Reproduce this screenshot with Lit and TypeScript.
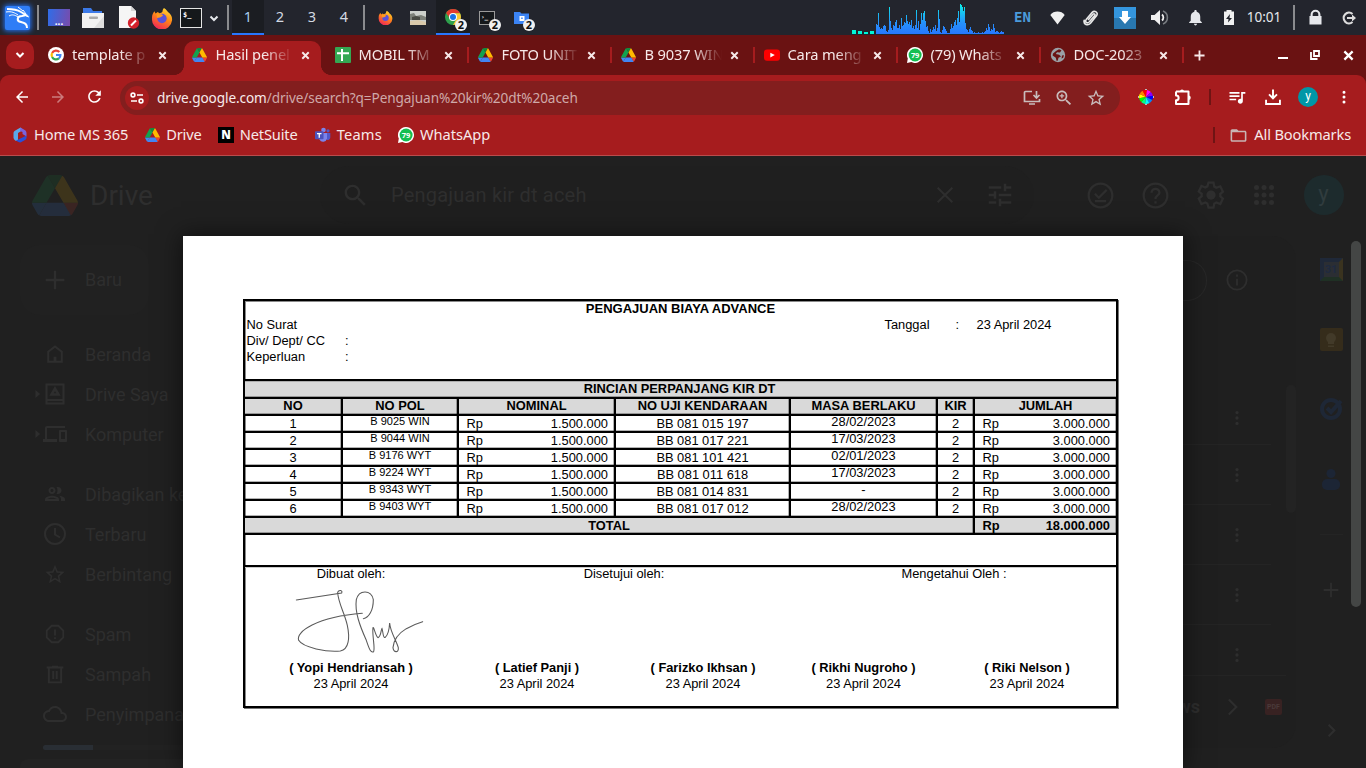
import { LitElement, html, svg, css } from "lit";
import { customElement } from "lit/decorators.js";

const P: Record<string, string> = {
  back: "M20 11H7.83l5.59-5.59L12 4l-8 8 8 8 1.41-1.41L7.83 13H20v-2z",
  forward: "M12 4l-1.41 1.41L16.17 11H4v2h12.17l-5.58 5.59L12 20l8-8z",
  reload: "M17.65 6.35C16.2 4.9 14.21 4 12 4c-4.42 0-7.99 3.58-7.99 8s3.57 8 7.99 8c3.73 0 6.84-2.55 7.73-6h-2.08c-.82 2.33-3.04 4-5.65 4-3.31 0-6-2.69-6-6s2.69-6 6-6c1.66 0 3.14.69 4.22 1.78L13 11h7V4l-2.35 2.35z",
  star: "M22 9.24l-7.19-.62L12 2 9.19 8.63 2 9.24l5.46 4.73L5.82 21 12 17.27 18.18 21l-1.63-7.03L22 9.24zM12 15.4l-3.76 2.27 1-4.28-3.32-2.88 4.38-.38L12 6.1l1.71 4.04 4.38.38-3.32 2.88 1 4.28L12 15.4z",
  search: "M15.5 14h-.79l-.28-.27C15.41 12.59 16 11.11 16 9.5 16 5.91 13.09 3 9.5 3S3 5.91 3 9.5 5.91 16 9.5 16c1.61 0 3.09-.59 4.23-1.57l.27.28v.79l5 4.99L20.49 19l-4.99-5zm-6 0C7.01 14 5 11.99 5 9.5S7.01 5 9.5 5 14 7.01 14 9.5 11.99 14 9.5 14z",
  zoom: "M15.5 14h-.79l-.28-.27C15.41 12.59 16 11.11 16 9.5 16 5.91 13.09 3 9.5 3S3 5.91 3 9.5 5.91 16 9.5 16c1.61 0 3.09-.59 4.23-1.57l.27.28v.79l5 4.99L20.49 19l-4.99-5zm-6 0C7.01 14 5 11.99 5 9.5S7.01 5 9.5 5 14 7.01 14 9.5 11.99 14 9.5 14zM8.7 6.8h1.6v1.9h1.9v1.6h-1.9v1.9H8.7v-1.9H6.8V8.7h1.9z",
  queue: "M15 6H3v2h12V6zm0 4H3v2h12v-2zM3 16h8v-2H3v2zM17 6v8.18c-.31-.11-.65-.18-1-.18-1.66 0-3 1.34-3 3s1.34 3 3 3 3-1.34 3-3V8h3V6h-5z",
  download: "M10.700 2h2.600v8.700l3.100-3.100 1.800 1.800L12 15.600 5.800 9.400l1.800-1.800 3.100 3.100zM1.500 15.500H4V20h16v-4.500h2.500v7h-21z",
  bell: "M12 22c1.1 0 2-.9 2-2h-4c0 1.1.9 2 2 2zm6-6v-5c0-3.07-1.64-5.64-4.5-6.32V4c0-.83-.67-1.5-1.5-1.5s-1.5.67-1.5 1.5v.68C7.63 5.36 6 7.92 6 11v5l-2 2v1h16v-1l-2-2z",
  people: "M9 13.75c-2.34 0-7 1.17-7 3.5V19h14v-1.75c0-2.33-4.66-3.5-7-3.5zM4.34 17c.84-.58 2.87-1.25 4.66-1.25s3.82.67 4.66 1.25H4.34zM9 12c1.93 0 3.5-1.57 3.5-3.5S10.930 5 9 5 5.5 6.57 5.500 8.500 7.070 12 9 12zm0-5c.83 0 1.500.67 1.500 1.500S9.830 10 9 10s-1.500-.67-1.500-1.500S8.170 7 9 7zm7.040 6.810c1.160.84 1.960 1.960 1.960 3.440V19h4v-1.750c0-2.020-3.500-3.170-5.960-3.440zM15 12c1.930 0 3.500-1.570 3.500-3.500S16.930 5 15 5c-.54 0-1.040.13-1.500.35.63.89 1 1.980 1 3.150s-.37 2.260-1 3.150c.46.22.96.35 1.500.35z",
  cloud: "M19.35 10.04C18.67 6.59 15.64 4 12 4 9.11 4 6.6 5.64 5.35 8.04 2.34 8.36 0 10.91 0 14c0 3.31 2.69 6 6 6h13c2.76 0 5-2.24 5-5 0-2.64-2.05-4.78-4.65-4.96zM19 18H6c-2.21 0-4-1.79-4-4 0-2.05 1.53-3.76 3.56-3.97l1.07-.11.5-.95C8.08 7.14 9.94 6 12 6c2.62 0 4.88 1.86 5.39 4.43l.3 1.5 1.53.11c1.56.1 2.78 1.41 2.78 2.96 0 1.65-1.35 3-3 3z",
  devices: "M4 6h18V4H4c-1.1 0-2 .9-2 2v11H0v3h14v-3H4V6zm19 2h-6c-.55 0-1 .45-1 1v10c0 .55.45 1 1 1h6c.55 0 1-.45 1-1V9c0-.55-.45-1-1-1zm-1 9h-4v-7h4v7z",
  tune: "M3 17v2h6v-2H3zM3 5v2h10V5H3zm10 16v-2h8v-2h-8v-2h-2v6h2zM7 9v2H3v2h4v2h2V9H7zm14 4v-2H11v2h10zm-6-4h2V7h4V5h-4V3h-2v6z",
  folder: "M20 6h-8l-2-2H4c-1.1 0-1.99.9-1.99 2L2 18c0 1.1.9 2 2 2h16c1.1 0 2-.9 2-2V8c0-1.1-.9-2-2-2zm0 12H4V8h16v10z",
  home: "M12 2.500L3.500 9v12.500h17V9zm6.300 16.800H16V12H8v7.300H5.700V10L12 5.200 18.300 10zM8 12h8v7.300h-2.500V15h-3v4.300H8z",
  dots: "M12 3.500a2 2 0 100 4 2 2 0 000-4zM12 10a2 2 0 100 4 2 2 0 000-4zM12 16.500a2 2 0 100 4 2 2 0 000-4z",
  plus: "M11 4h2v7h7v2h-7v7h-2v-7H4v-2h7z",
  caret: "M9 4l9 8-9 8z",
  spam: "M8 2h8l6 6v8l-6 6H8l-6-6V8zm.8 2L4 8.800v6.400L8.800 20h6.400l4.800-4.800V8.800L15.200 4zM11 7h2v6.500h-2zm0 8.500h2v2h-2z",
  lock: "M5 10V8a7 7 0 0114 0v2h1.500v12h-17V10zm3 0h8V8a4 4 0 00-8 0z",
};
const icon = (n: string, s = 20, c = "") =>
  html`<svg class="ic ${c}" width=${s} height=${s} viewBox="0 0 24 24"><path fill="currentColor" fill-rule="evenodd" d=${P[n]}></path></svg>`;
const stroke = (d: string, s = 20, w = 2, c = "") =>
  html`<svg class="ic ${c}" width=${s} height=${s} viewBox="0 0 24 24"><path fill="none" stroke="currentColor" stroke-width=${w} d=${d}></path></svg>`;

const driveLogo = (w: number, h: number) => html`<svg class="ic" width=${w} height=${h} viewBox="0 0 87.3 78" preserveAspectRatio="none">
  <path fill="#3c8cf5" d="M6.600 66.850l3.850 6.650c.8 1.400 1.950 2.500 3.300 3.300L27.500 53H0c0 1.550.4 3.100 1.200 4.500z"/>
  <path fill="#12a150" d="M43.650 25L29.900 1.200c-1.350.8-2.500 1.900-3.300 3.300L1.200 48.500C.4 49.900 0 51.450 0 53h27.500z"/>
  <path fill="#ea4335" d="M73.550 76.800c1.350-.8 2.500-1.900 3.300-3.300l9.250-16c.8-1.400 1.200-2.950 1.200-4.500H59.800l5.850 11.500z"/>
  <path fill="#128a3c" d="M43.650 25L57.400 1.200C56.050.4 54.500 0 52.900 0H34.400c-1.600 0-3.150.45-4.500 1.200z"/>
  <path fill="#4285f4" d="M59.800 53H27.500L13.750 76.800c1.350.8 2.900 1.200 4.500 1.200h50.800c1.600 0 3.150-.45 4.500-1.200z"/>
  <path fill="#ffba00" d="M73.400 26.500L60.700 4.500c-.8-1.400-1.950-2.500-3.300-3.300L43.650 25 59.800 53h27.450c0-1.550-.4-3.100-1.200-4.500z"/></svg>`;
const google = html`<svg class="ic" width="16" height="16" viewBox="0 0 16 16"><circle cx="8" cy="8" r="8" fill="#fff"/>
  <g fill="none" stroke-width="2.200"><path stroke="#ea4335" d="M11.300 5.100A4.400 4.400 0 004.100 6"/><path stroke="#fbbc05" d="M4.100 6a4.400 4.400 0 000 4"/><path stroke="#34a853" d="M4.100 10a4.400 4.400 0 006.800 1.400"/><path stroke="#4285f4" d="M8 8h4.400a4.400 4.400 0 01-1.500 3.400"/></g></svg>`;
const sheets = html`<svg class="ic" width="16" height="16" viewBox="0 0 16 16"><rect width="16" height="16" rx="1" fill="#34a853"/><path fill="#fff" d="M6 2h2v3.200h6v2H8V14H6V7.200H2v-2h4z"/></svg>`;
const youtube = html`<svg class="ic" width="16" height="16" viewBox="0 0 16 16"><rect y="2.500" width="16" height="11.300" rx="3" fill="#f00"/><path fill="#fff" d="M6.300 5.700l4.500 2.400-4.500 2.400z"/></svg>`;
const whatsapp = html`<svg class="ic" width="16" height="16" viewBox="0 0 16 16"><path fill="#fff" d="M8 0a8 8 0 11-3.700 15.100L0 16l.8-4.400A8 8 0 018 0z"/><circle cx="8.100" cy="8" r="6.500" fill="#14bf50"/><text x="8.100" y="10.800" text-anchor="middle" font-family="Open Sans" font-weight="700" font-size="7.500" fill="#fff">79</text></svg>`;
const globe = html`<svg class="ic" width="16" height="16" viewBox="0 0 16 16"><circle cx="8" cy="8" r="7.200" fill="#9aa0a6"/><path fill="#6a1212" d="M9 2.200l2.500 1-1.500 2.300-3-.3L5.800 7l3.400.8 1.800 1.700-2.500 1.200-.8 3H6.500l-.7-3L2.600 8.600l.4-2L6 4zM12 8.500l2-.3-.8 2.600-1.700.8z"/></svg>`;
const ms365 = html`<svg class="ic" width="16" height="16" viewBox="0 0 16 16"><path fill="#5aa8ea" d="M8.500.5L2.500 4Q1.500 5 1.500 6v5q.5 2 2.500 3l2-.8V6l5-3z"/><path fill="#7a63dd" d="M8.500.5L13.500 3.500q1 1 1 2.500v3.500L10.500 7V5L8 4z"/><path fill="#2a50d8" d="M14.500 8.500V11q-.3 1.300-1.500 2L9 15.300q-1.500.4-3-.5l-2-1.300 6.500-3z"/></svg>`;
const netsuite = html`<svg class="ic" width="16" height="16" viewBox="0 0 16 16"><rect width="16" height="16" fill="#000"/><text x="8" y="12" text-anchor="middle" font-family="Open Sans" font-weight="800" font-size="11.500" fill="#fff">N</text></svg>`;
const teams = html`<svg class="ic" width="16" height="16" viewBox="0 0 16 16"><circle cx="8.500" cy="3" r="2.300" fill="#7b83eb"/><circle cx="13" cy="3.800" r="1.600" fill="#5059c9"/><path fill="#5059c9" d="M11 6h4.300v4.500a2.500 2.500 0 01-4 2z"/><path fill="#7b83eb" d="M5 6h7v5.500a4 4 0 01-7.500 1z"/><rect y="4.200" width="8.500" height="8" rx=".8" fill="#4b53bc"/><path fill="#fff" d="M2 6h4.500v1.200H4.900v3.600H3.600V7.200H2z"/></svg>`;
const firefox = (s: number) => html`<svg class="ic" width=${s} height=${s} viewBox="0 0 22 22"><defs><linearGradient id="ff" x1="0.8" y1="0" x2="0.3" y2="1"><stop offset="0" stop-color="#ffe03a"/><stop offset=".45" stop-color="#ff8a16"/><stop offset="1" stop-color="#f0235a"/></linearGradient></defs>
  <path fill="url(#ff)" d="M13 1c3 2 3 3 4 4 3 2 4.500 5 4 8.500A10 10 0 011 11.500C.8 8 2 6 3.500 4.200L4.500 6.500 6.800 5l1.600 1.200C9.500 6 11 5.500 11.500 4.500c.2-1.400.5-2.500 1.500-3.500z"/><circle cx="11" cy="11.500" r="4.700" fill="#5a52d8"/><path fill="#ff9a1c" d="M5.500 7l5.500.2 1 1.600-3 1.700-3 .5z"/></svg>`;
const chromeIcon = html`<svg class="ic" width="16" height="16" viewBox="0 0 16 16"><circle cx="8" cy="8" r="8" fill="#2ea04c"/><path fill="#e33b2e" d="M1.100 4A8 8 0 0115 4.200H8L5 9.600z"/><path fill="#fcc934" d="M15 4.200A8 8 0 018 16l3.400-5.900L8 4.200z"/><circle cx="8" cy="8" r="4" fill="#fff"/><circle cx="8" cy="8" r="3" fill="#1a73e8"/></svg>`;

const bars = [10,9,21,7,5,6,5,8,9,8,3,2,4,27,13,6,4,9,8,12,14,6,6,9,5,16,8,9,12,11,19,13,10,12,9,14,6,8,5,9,24,6,13,4,10,21,14,21,23,13,7,8,3,1,5,2,4,7,5,9,3,6,24,15,2,1,4,8,7,5,3,1,1,1,5,10,6,8,12,14,9,16,23,12,30,29,27,23,27,11,5,4,2,5,7,4,3,1,2,1,1,1,2,1,1,1,2,1,2,3,6,4,10,7,3,5,4,10,6,2,3,3,2,1,2,3,2,2];

@customElement("system-panel")
class SystemPanel extends LitElement {
  static styles = css`
    :host { display: block; }
    .panel { display: grid; height: 35px; align-items: center; justify-items: center; background: #23252d; color: #e6e8ec;
      font: 15px "Noto Sans", sans-serif;
      grid-template-columns: 34px 8px 34px 34px 37px 29px 30px 16px 10px 32px 32px 32px 32px 8px 2px 30px 36px 34px 34px 34px 1fr 23px 130px 35px 34px 34px 34px 36px 34px 34px 36px 24px 18px 42px; }
    .ic { display: block; }
    .vsep { width: 2px; height: 25px; background: #8a8b8e; }
    .shift { margin-left: 2px; }
    .ws, .task { box-sizing: border-box; width: 100%; height: 35px; display: flex; align-items: center; justify-content: center; position: relative; }
    .ws { color: #d4dae2; padding-bottom: 3px; font-size: 14.500px; }
    .task.on { padding-top: 1px; }
    .on { background: #1b1d22; border-bottom: 2px solid #2777ff; }
    .ws.on { color: #a9cdee; padding-bottom: 1px; }
    .badge { position: absolute; left: 50%; top: 19px; margin-left: 2px; width: 12px; height: 12px; border-radius: 6px; background: #f0f0f0; color: #111; font: bold 11px/12px "Noto Sans"; text-align: center; }
    .lang { font: bold 14px "DejaVu Sans Mono", monospace; color: #4b9bdb; padding-bottom: 2px; }
    .clock { font-size: 13.600px; padding-bottom: 3px; }
    .kali { background: #2f7df6; width: 25px; height: 24px; border-radius: 2px; box-shadow: 0 0 5px 1px #2272f5; }
    .desk { width: 22px; height: 17px; background: linear-gradient(100deg, #2f6de8, #7a4bab); display: flex; justify-content: center; align-items: flex-end; color: #fff; font: bold 10px/10px "Noto Sans"; }
    .term { box-sizing: border-box; width: 22px; height: 20px; border: 1px solid #e5e5e5; background: #15181b; color: #fff; font: bold 7px/10px "DejaVu Sans Mono"; padding: 1px 2px; }
    .term.sm { width: 16px; height: 14px; border-color: #9a9a9a; padding: 0 1px; font-size: 6px; }
    .dl { width: 22px; height: 22px; background: linear-gradient(#3496de 50%, #2878b0 50%); display: flex; align-items: center; justify-content: center; color: #fff; }
    .out { margin-left: 8px; }
  `;
  render() {
    const d = bars.map((h, i) => `M${i} 30v-${h}h1v${h}z`).join("");
    const sep = html`<span class="vsep"></span>`;
    return html`<div class="panel">
      <span class="kali"><svg class="ic" width="25" height="24" viewBox="0 0 25 24" fill="none" stroke="#fff"><path stroke-width="2" d="M2 3c5 0 9 0 14 3l5 3-4 1c-5 0-6 5-1 6 4 1 6 2 6 6"/><path stroke-width="1" d="M1 6c6-1 9 1 12 3M4 10c3-2 6-1 9 1M18 4l3 4M21 10l3 1M13 1l5 4"/></svg></span>
      ${sep}
      <span class="desk">...</span>
      <svg class="ic" width="22" height="20" viewBox="0 0 22 20"><path fill="#3b79e8" d="M1 0h8l2 3h9v4H1z"/><rect y="5" width="22" height="15" fill="#f1f1f1"/><path fill="#dedede" d="M22 8v12H12z"/><rect x="7" y="8.500" width="9" height="2.500" rx="1" fill="#aaa"/></svg>
      <svg class="ic" width="22" height="23" viewBox="0 0 22 23"><path fill="#f5f5f5" d="M1 0h12l5 5v17H1z"/><path fill="#d5d5d5" d="M13 0l5 5h-5z"/><circle cx="15.500" cy="17" r="5.700" fill="#d3212c"/><path stroke="#fff" stroke-width="2" d="M13 19.500l5-5"/></svg>
      ${firefox(22)}
      <span class="term">$_</span>
      ${stroke("M5 9l7 7 7-7", 12, 4)}
      <span class="vsep shift"></span>
      ${[1, 2, 3, 4].map((n) => html`<span class="ws ${n === 1 ? "on" : ""}">${n}</span>`)}
      ${sep}<span></span>
      ${firefox(15)}
      <svg class="ic" width="16" height="14" viewBox="0 0 16 14"><rect width="16" height="14" fill="#ccd0cb"/><path fill="#7d8179" d="M0 3l4-1 2 3 5-1 5 2v3H0z"/><path fill="#494b44" d="M2 6l4-1 4 1v3H2z"/><path fill="#d9c9ab" d="M0 10l8-1 8 2v3H0z"/></svg>
      <span class="task on">${chromeIcon}<b class="badge">2</b></span>
      <span class="task"><span class="term sm">›_</span><b class="badge">2</b></span>
      <span class="task"><svg class="ic" width="15" height="12" viewBox="0 0 15 12"><path fill="#3b84f5" d="M0 0h6l1.500 1.500H15V12H0z"/><rect x="5.500" y="4" width="5" height="5" fill="#fff"/><rect x="7.200" y="5.500" width="1.500" height="1.500" fill="#3b84f5"/></svg><b class="badge">2</b></span>
      <span></span>
      <svg class="ic" width="23" height="35" viewBox="0 0 23 35"><path fill="#00f5d8" d="M0 30h4v4H0zM6 31h4v3H6zM12 32h4v2h-4zM18 31h4v3h-4z"/></svg>
      <svg class="ic" width="128" height="35" viewBox="0 0 128 35"><defs><linearGradient id="g" gradientUnits="userSpaceOnUse" x1="0" y1="30" x2="0" y2="0"><stop offset="0" stop-color="#2777ff"/><stop offset=".4" stop-color="#2594fa"/><stop offset="1" stop-color="#0cf0e8"/></linearGradient></defs><path fill="url(#g)" transform="translate(0 4)" d=${d}/></svg>
      <span class="lang">EN</span>
      <svg class="ic" width="15" height="14" viewBox="0 0 15 14"><path fill="#f0f0f0" d="M.3 4C3.500-.6 11.500-.6 14.700 4L7.500 13.500z"/></svg>
      <svg class="ic" width="16" height="16" viewBox="0 0 16 16"><path fill="none" stroke="#e8e8e8" stroke-width="1.600" stroke-linecap="round" d="M5.500 9.500L10 4.300c1.200-1.200 2.600 0 1.700 1.300L6.200 12c-2 2-4.700 0-3-2.400l6-7.200c2.400-2.500 6.400.2 4.300 3.400L7.500 13.300c-2.800 3-7.300 1-6.300-3"/></svg>
      <span class="dl"><svg class="ic" width="12" height="13" viewBox="0 0 12 13"><path fill="#fff" d="M3 0h6v6h3l-6 7-6-7h3z"/></svg></span>
      <svg class="ic" width="18" height="17" viewBox="0 0 18 17"><path fill="#f0f0f0" d="M0 6h3.500L9 1v15l-5.500-5H0z"/><path fill="none" stroke="#f0f0f0" stroke-width="1.800" d="M11 5.500a4 4 0 010 6"/><path fill="none" stroke="#777b80" stroke-width="1.600" d="M12 2a7 7 0 010 13"/></svg>
      ${icon("bell", 19)}
      <svg class="ic" width="10" height="15" viewBox="0 0 10 15"><path fill="#f0f0f0" d="M2.500 0h5v1.500H10V15H0V1.500h2.500z"/><path fill="#23252d" d="M6 4L2 9h2.500L4 12.500 8 8H5.500z"/></svg>
      <span class="clock">10:01</span>
      ${sep}
      ${icon("lock", 17)}
      <svg class="ic out" width="14" height="14" viewBox="0 0 14 14"><path fill="none" stroke="#ddd" stroke-width="2.200" d="M10.500 3a5.300 5.300 0 100 8"/><path fill="#ddd" d="M5 6h5V3.500L14 7l-4 3.500V8H5z"/></svg>
    </div>`;
  }
}

@customElement("browser-chrome")
class BrowserChrome extends LitElement {
  static styles = css`
    :host { display: block; color: #f7e9e9; font: 14.670px "Noto Sans", sans-serif; letter-spacing: -.15px; }
    .ic { display: block; flex: none; }
    .strip { height: 40px; background: #6a1212; display: flex; align-items: center; }
    .drop { width: 28px; height: 28px; margin: 0 6px; border-radius: 10px; background: #a61c1e; display: grid; place-items: center; color: #fff; }
    .tab { box-sizing: border-box; position: relative; width: 143px; height: 40px; display: flex; align-items: center; padding-left: 8px; flex: none; }
    .tab .x { margin-left: auto; margin-right: 15.500px; }
    .tab + .tab { padding-left: 8.500px; }
    .title { margin-left: 8px; white-space: nowrap; margin-top: -2px; -webkit-mask-image: linear-gradient(90deg, #000 48px, transparent 77px); mask-image: linear-gradient(90deg, #000 48px, transparent 77px); }
    .fav { width: 16px; height: 16px; display: grid; place-items: center; flex: none; }
    .active { z-index: 0; }
    .active::before { content: ""; position: absolute; z-index: -1; left: 1px; right: 5px; top: 6px; bottom: 0; background: #a61c1e; border-radius: 10px 10px 0 0; }
    .active::after { content: ""; position: absolute; z-index: -1; left: -9px; right: -5px; bottom: 0; height: 10px;
      background: radial-gradient(circle at 0 0, transparent 9.700px, #a61c1e 10.200px) left / 10px 10px no-repeat, radial-gradient(circle at 100% 0, transparent 9.700px, #a61c1e 10.200px) right / 10px 10px no-repeat; }
    .div::before { content: ""; position: absolute; right: 0; top: 12px; width: 2px; height: 16px; background: #a61c1e; }
    .new { width: 31px; display: grid; place-items: center; }
    .controls { margin-left: auto; display: grid; grid-template-columns: 32px 32px 34px; place-items: center; padding-right: 1px; color: #fff; }
    .under { background: #6a1212; }
    .bar { height: 40px; padding-top: 3px; box-sizing: border-box; background: #a61c1e; border-radius: 9px 9px 0 0; display: grid; align-items: center; justify-items: center; color: #fff;
      grid-template-columns: 4px 36px 36px 36px 8px 1000px 8px 36px 37px 17px 38px 33px 38px 34px 5px; }
    .dim { opacity: .42; }
    .omni { box-sizing: border-box; width: 1000px; height: 34px; margin-top: 3px; border-radius: 17px; background: #831e1e; display: flex; align-items: center; padding: 0 14px 0 5px; color: #cfa9a9; font-size: 13.600px; letter-spacing: -.09px; }
    .site { width: 24px; height: 24px; border-radius: 12px; background: #a61c1e; display: grid; place-items: center; color: #fff; }
    .url { margin-left: 8px; flex: 1; white-space: nowrap; margin-top: -1px; }
    .host { color: #f7ebeb; }
    .acts { display: flex; gap: 12px; color: #c9bcbc; }
    .mark { width: 2px; height: 16px; background: #6f1414; }
    .you { width: 20px; height: 20px; border-radius: 10px; background: #0097a7; font: 12px/19px Roboto; text-align: center; }
    .book { height: 40px; background: #a61c1e; border-bottom: 1px solid #b94c4c; display: flex; align-items: center; padding: 0 15px 0 12px; }
    .bm { display: flex; align-items: center; gap: 6px; margin-right: 16px; }
    .bm .label, .all .label { margin-top: -2px; }
    .teams { letter-spacing: .2px; margin-left: 1px; }
    .wa { letter-spacing: -.05px; margin-left: 0; }
    .all { margin-left: auto; display: flex; align-items: center; }
    .all .ic { margin: 0 6px 0 14px; color: #c9b4b4; }
  `;
  render() {
    const d = driveLogo(15, 14);
    const tabs: [unknown, string][] = [[google, "template p"], [d, "Hasil penel"], [sheets, "MOBIL TM"], [d, "FOTO UNIT"], [d, "B 9037 WIN"], [youtube, "Cara meng"], [whatsapp, "(79) Whats"], [globe, "DOC-2023"]];
    const x = stroke("M5 5l14 14M19 5L5 19", 11, 4.2, "x");
    return html`
      <div class="strip">
        <span class="drop">${stroke("M5 8l7 7 7-7", 12, 4)}</span>
        ${tabs.map(([f, t], i) => html`<div class="tab ${i === 1 ? "active" : i > 1 ? "div" : ""}"><span class="fav">${f}</span><span class="title">${t}</span>${x}</div>`)}
        <span class="new">${stroke("M12 1v22M1 12h22", 11, 4)}</span>
        <span class="controls">
          <svg class="ic" width="10" height="10" viewBox="0 0 10 10"><path fill="#fff" d="M0 7h10v2H0z"/></svg>
          <svg class="ic" width="10" height="10" viewBox="0 0 10 10"><path fill="none" stroke="#fff" stroke-width="1.800" d="M4 1h5v5H4zM1 2v7h6.500"/></svg>
          ${stroke("M3 3l18 18M21 3L3 21", 11, 5)}
        </span>
      </div>
      <div class="under"><div class="bar">
        <span></span>${icon("back", 18)}${icon("forward", 18, "dim")}${icon("reload", 19)}<span></span>
        <div class="omni">
          <span class="site"><svg class="ic" width="14" height="12" viewBox="0 0 14 12"><g fill="none" stroke="#fff" stroke-width="1.600"><circle cx="3" cy="3" r="1.900"/><path d="M7 3h6M1 9h6"/><circle cx="11" cy="9" r="1.900"/></g></svg></span>
          <span class="url"><span class="host">drive.google.com</span>/drive/search?q=Pengajuan%20kir%20dt%20aceh</span>
          <span class="acts">
            <svg class="ic" width="20" height="20" viewBox="0 0 20 20"><path fill="none" stroke="currentColor" stroke-width="1.700" d="M10 3.500H3.500a1 1 0 00-1 1v9h15V11M14.500 3v7M11.500 7l3 3 3-3M7 16h6"/></svg>
            ${icon("zoom", 20)}${icon("star", 20)}
          </span>
        </div><span></span>
        <svg class="ic" width="16" height="16" viewBox="0 0 16 16">${["#ff0", "#ff8000", "#f00", "#f0f", "#80f", "#00f", "#08f", "#0ff", "#0f8", "#0f0"].map((c, i) => {
          const a = (-190 + 36 * i) * Math.PI / 180, b = (-190 + 36 * (i + 1)) * Math.PI / 180;
          return svg`<path fill=${c} d="M8 8L${8 + 7 * Math.cos(a)} ${8 + 7 * Math.sin(a)}A7 7 0 0 1 ${8 + 7 * Math.cos(b)} ${8 + 7 * Math.sin(b)}z"/>`;
        })}<path fill="#bbb" d="M7 0h2v1H7zM7 15h2v1H7zM0 7h1v2H0zM15 7h1v2h-1z"/></svg>
        <svg class="ic" width="18" height="18" viewBox="0 0 18 18"><path fill="none" stroke="#fff" stroke-width="2" stroke-linejoin="round" d="M2 3.500h12.500v4M2 3.500v4c3.500 0 3.500 4.800 0 4.800V16h12.500v-4M14.500 7.500v4.500"/><path fill="#fff" d="M6 3.500a2 2 0 014 0zM14.500 7.500a2 2 0 010 4.500z"/></svg>
        <span class="mark"></span>
        ${icon("queue", 20)}${icon("download", 18)}
        <span class="you">y</span>${icon("dots", 18)}<span></span>
      </div></div>
      <div class="book">
        <span class="bm">${ms365}<span class="label">Home MS 365</span></span>
        <span class="bm"><span class="fav">${d}</span><span class="label">Drive</span></span>
        <span class="bm">${netsuite}<span class="label">NetSuite</span></span>
        <span class="bm teams">${teams}<span class="label">Teams</span></span>
        <span class="bm wa">${whatsapp}<span class="label">WhatsApp</span></span>
        <span class="all"><i class="mark"></i>${icon("folder", 19)}<span class="label">All Bookmarks</span></span>
      </div>`;
  }
}

@customElement("drive-backdrop")
class DriveBackdrop extends LitElement {
  static styles = css`
    :host { display: block; height: 612px; overflow: hidden; background: #202020; color: #2e2e2e; font: 18px Roboto, sans-serif; }
    .ic { display: block; flex: none; }
    .head { height: 78px; display: flex; align-items: center; padding-left: 32px; box-sizing: border-box; margin-bottom: 2px; }
    .logo { opacity: .13; }
    .brand { font-size: 28px; margin-left: 12px; width: 230px; flex: none; }
    .find { width: 714px; flex: none; height: 58px; border-radius: 29px; background: #1f1f1f; display: flex; align-items: center; padding-left: 21px; box-sizing: border-box; font-size: 20px; }
    .q { width: 543px; margin-left: 21px; letter-spacing: .2px; flex: none; }
    .find .tune { margin-left: 29px; }
    .tools { display: grid; grid-template-columns: 55px 55px 55px 51px 69px; place-items: center; margin-left: 39px; }
    .me { width: 40px; height: 40px; border-radius: 20px; background: #1d2b2d; font: 22px/38px Roboto; text-align: center; color: #303c3e; }
    .body { height: 532px; display: flex; justify-content: space-between; }
    .side { width: 230px; }
    .newbtn { width: 129px; height: 70px; margin: 9px 0 19px 20px; border-radius: 20px; background: #212121; display: flex; align-items: center; box-sizing: border-box; padding: 0 0 1px 21px; }
    .newbtn .ic { margin-right: 16px; }
    .nav { height: 40px; display: flex; align-items: center; white-space: nowrap; }
    .arrow { width: 43px; display: flex; justify-content: flex-end; flex: none; }
    .nav > .ic { margin-right: 18px; width: 24px; }
    .gap { height: 20px; }
    .meter { margin: 11px 0 0 43px; height: 5px; width: 180px; border-radius: 3px; background: linear-gradient(90deg, #292e34 50px, #222 50px); }
    .card { margin: 9px 0 0 20px; height: 20px; border-radius: 8px; background: #232323; }
    .right { display: flex; }
    .list { width: 146px; height: 512px; background: #1f1f1f; border-radius: 0 24px 24px 0; }
    .list-top { height: 149px; display: flex; padding-top: 24px; box-sizing: border-box; }
    .pill { box-sizing: border-box; width: 57px; height: 41px; border: 1px solid #282828; border-left: 0; border-radius: 0 20px 20px 0; margin-right: 19px; }
    .list-top .ic { margin-top: 9px; }
    .rows { display: flex; height: 291px; }
    .rowcol { width: 136px; }
    .row { height: 60px; box-sizing: border-box; border-bottom: 1px solid #242424; width: 121px; display: flex; align-items: center; padding-left: 77px; padding-top: 1px; }
    .row:first-child { padding-top: 7px; }
    .row:last-child { height: 51px; width: 136px; padding-top: 10px; }
    .thumb { width: 10px; height: 128px; border-radius: 5px; background: #232323; }
    .foot { height: 61px; display: flex; align-items: center; font: bold 18px Roboto; }
    .foot span { width: 50px; text-align: right; margin-right: 23px; }
    .pdf { margin-left: 22px; width: 17px; height: 16px; background: #382222; font: bold 7px/16px Roboto; text-align: center; color: #4a3a3a; border-radius: 2px; }
    .rail { width: 55px; display: flex; flex-direction: column; align-items: center; padding-left: 15px; box-sizing: border-box; }
    .cal { width: 23px; height: 23px; box-sizing: border-box; border: 4px solid #1f2838; border-right-color: #3a331f; border-bottom-color: #1f3024; background: #2b2e33; font: bold 11px/15px Roboto; text-align: center; color: #1f2a40; margin: 22px 0 47px; }
    .keep { width: 23px; height: 23px; background: #352c1b; display: grid; place-items: center; color: #423a29; border-radius: 2px; margin-bottom: 46px; }
    .tasks { color: #1e2736; margin-bottom: 48px; }
    .rule { width: 23px; height: 1px; background: #242424; margin: 44px 0; }
    .grow { height: 121px; }
    .scroll { width: 15px; padding-top: 5px; box-sizing: border-box; }
    .scroll i { display: block; width: 10px; height: 366px; border-radius: 5px; background: #444645; }
  `;
  nav(label: string, g: unknown, arrow = false) {
    return html`<div class="nav"><span class="arrow">${arrow ? icon("caret", 12) : ""}</span>${g}${label}</div>`;
  }
  render() {
    return html`
      <div class="head">
        <span class="logo">${driveLogo(46, 41)}</span><span class="brand">Drive</span>
        <div class="find">${icon("search", 29)}<span class="q">Pengajuan kir dt aceh</span>${stroke("M4 4l16 16M20 4L4 20", 22, 2.2)}${icon("tune", 30, "tune")}</div>
        <div class="tools">
          ${stroke("M12 1.500a10.500 10.500 0 100 21 10.500 10.500 0 000-21zM7 17h10M7 10.500l3.500 3.500L17.500 7", 27, 2)}
          <svg class="ic" width="27" height="27" viewBox="0 0 24 24" fill="none" stroke="currentColor" stroke-width="2"><circle cx="12" cy="12" r="10.500"/><path d="M8.500 9.500a3.500 3.500 0 117 0c0 2.500-3.500 2.500-3.500 5.500M12 17v2"/></svg>
          <svg class="ic" width="30" height="30" viewBox="0 0 24 24"><path fill="none" stroke="currentColor" stroke-width="1.800" d="M19.430 12.980c.04-.32.07-.64.07-.98s-.03-.66-.07-.98l2.110-1.650-2.120-4.320-3.100 1.220c-.52-.4-1.080-.73-1.690-.98L14 2h-4l-.87 3.070c-.61.25-1.170.59-1.690.98l-3.100-1.220-2.120 4.320 2.350 1.870c-.04.32-.07.65-.07.98s.03.66.07.98l-2.350 1.870 2.120 4.320 3.100-1.220c.52.4 1.080.73 1.690.98L10 22h4l.63-3.070c.61-.25 1.170-.59 1.690-.98l3.100 1.220 2.120-4.320z"/><circle cx="12" cy="12" r="3.700" fill="currentColor"/></svg>
          <svg class="ic" width="20" height="20" viewBox="0 0 20 20" fill="currentColor">${[2.5, 10, 17.5].map((a) => [2.5, 10, 17.5].map((b) => svg`<circle cx=${a} cy=${b} r="2.500"/>`))}</svg>
          <span class="me">y</span>
        </div>
      </div>
      <div class="body">
        <div class="side">
          <div class="newbtn">${icon("plus", 28)}Baru</div>
          ${this.nav("Beranda", icon("home", 22))}
          ${this.nav("Drive Saya", html`<svg class="ic" width="24" height="24" viewBox="0 0 24 24"><path fill="none" stroke="currentColor" stroke-width="2" d="M3.500 2.500h17v19h-17zM3.500 18h17"/><path fill="none" stroke="currentColor" stroke-width="2.500" d="M12 6.500l-3.500 6h7z"/></svg>`, true)}
          ${this.nav("Komputer", icon("devices", 24), true)}
          <div class="gap"></div>
          ${this.nav("Dibagikan kepada saya", icon("people", 26))}
          ${this.nav("Terbaru", stroke("M12 2a10 10 0 100 20 10 10 0 000-20zM12 6v6.500l5 3", 24, 2))}
          ${this.nav("Berbintang", icon("star", 23))}
          <div class="gap"></div>
          ${this.nav("Spam", icon("spam", 22))}
          ${this.nav("Sampah", stroke("M5 5v16h14V5M2.500 4h19M8.500 3h7M10 8v9M14 8v9", 21, 2.2))}
          ${this.nav("Penyimpanan", icon("cloud", 24))}
          <div class="meter"></div><div class="card"></div>
        </div>
        <div class="right">
          <div class="list">
            <div class="list-top"><span class="pill"></span>${stroke("M12 1.500a10.500 10.500 0 100 21 10.500 10.500 0 000-21zM12 10.500V18M12 6v2.500", 22, 2)}</div>
            <div class="rows"><div class="rowcol">${[0, 1, 2, 3, 4].map(() => html`<div class="row">${icon("dots", 20)}</div>`)}</div><span class="thumb"></span></div>
            <div class="foot"><span>ws</span>${stroke("M7 3l9 9-9 9", 20, 2.5)}<i class="pdf">PDF</i></div>
          </div>
          <div class="rail">
            <span class="cal">31</span>
            <span class="keep"><svg class="ic" width="12" height="14" viewBox="0 0 12 14" fill="currentColor"><circle cx="6" cy="5" r="5"/><path d="M3 9h6v2H3zM3 12.500h6v1.500H3z"/></svg></span>
            <span class="tasks">${stroke("M12 3a9 9 0 100 18 9 9 0 000-18M8 11l4 4L22 4", 24, 4)}</span>
            <svg class="ic" width="18" height="21" viewBox="0 0 18 21" fill="#1c2535"><circle cx="9" cy="4.500" r="4.500"/><rect y="10" width="18" height="11" rx="5"/></svg>
            <span class="rule"></span>
            ${icon("plus", 22)}
            <span class="grow"></span>
            ${stroke("M8 4l8 8-8 8", 17, 3)}
          </div>
          <div class="scroll"><i></i></div>
        </div>
      </div>`;
  }
}

const data = [
  ["B 9025 WIN", "BB 081 015 197", "28/02/2023"],
  ["B 9044 WIN", "BB 081 017 221", "17/03/2023"],
  ["B 9176 WYT", "BB 081 101 421", "02/01/2023"],
  ["B 9224 WYT", "BB 081 011 618", "17/03/2023"],
  ["B 9343 WYT", "BB 081 014 831", "-"],
  ["B 9403 WYT", "BB 081 017 012", "28/02/2023"],
];

@customElement("advance-form")
class AdvanceForm extends LitElement {
  static styles = css`
    :host { display: block; box-sizing: border-box; width: 1000px; height: 532px; background: #fff; color: #000; padding: 63px 0 0 60px; box-shadow: 0 0 22px 2px rgba(0,0,0,.5); font: 12.850px/16px "Liberation Sans", Arial, sans-serif; }
    .form { box-sizing: border-box; width: 875px; height: 409px; border: 2px solid #000; box-shadow: inset 1px 1px 0 #8a8a8a, 1px 1px 0 #777; }
    .top { height: 78px; border-bottom: 2px solid #000; box-sizing: content-box; }
    .title { text-align: center; font-weight: bold; font-size: 13px; line-height: 15px; height: 16px; }
    .meta { display: grid; grid-template-columns: 98.500px 539.500px 71px 21px 1fr; padding-left: 1.500px; }
    .bar { background: #d9d9d9; text-align: center; font-weight: bold; border-bottom: 2px solid #000; height: 16px; line-height: 15px; box-shadow: inset 0 -1px 0 rgba(0,0,0,.3), inset 0 1px 0 rgba(0,0,0,.2); }
    .bar span { margin-left: -2px; }
    .row { display: grid; grid-template-columns: 98px 116px 157px 175px 147px 37px 141px; height: 15px; border-bottom: 2px solid #000; line-height: 15px; box-shadow: inset 0 -1px 0 rgba(0,0,0,.3); }
    .row > * { border-right: 2px solid #000; box-shadow: inset -1px 0 0 rgba(0,0,0,.3); text-align: center; height: 15px; }
    .row > :last-child { border-right: 0; }
    .head { background: #d9d9d9; font-weight: bold; line-height: 14px; font-size: 12.900px; }
    .pol { font-size: 11px; line-height: 11px; }
    .date { line-height: 11px; }
    .money { display: flex; justify-content: space-between; padding: 0 6px 0 7.500px; }
    .total { grid-template-columns: 730px 141px; background: #d9d9d9; font-weight: bold; }
    .blank { height: 30px; border-bottom: 2px solid #000; box-shadow: 0 1px 0 #ccc; }
    .roles { display: grid; grid-template-columns: 212px 334px 326px; text-align: center; line-height: 14px; height: 16px; }
    .sig { display: block; margin: 4px 0 0 48px; }
    .names { display: grid; grid-template-columns: 212px 160px 172px 149px 178px; text-align: center; margin-top: 6px; }
    .names b { display: block; }
  `;
  render() {
    const heads = ["NO", "NO POL", "NOMINAL", "NO UJI KENDARAAN", "MASA BERLAKU", "KIR", "JUMLAH"];
    const money = (v: string) => html`<span class="money"><span>Rp</span><span>${v}</span></span>`;
    return html`<div class="form">
      <div class="top">
        <div class="title">PENGAJUAN BIAYA ADVANCE</div>
        <div class="meta"><span>No Surat</span><span></span><span>Tanggal</span><span>:</span><span>23 April 2024</span></div>
        <div class="meta"><span>Div/ Dept/ CC</span><span>:</span></div>
        <div class="meta"><span>Keperluan</span><span>:</span></div>
      </div>
      <div class="bar"><span>RINCIAN PERPANJANG KIR DT</span></div>
      <div class="row head">${heads.map((h) => html`<span>${h}</span>`)}</div>
      ${data.map((r, i) => html`<div class="row"><span>${i + 1}</span><span class="pol">${r[0]}</span>${money("1.500.000")}<span>${r[1]}</span><span class="date">${r[2]}</span><span>2</span>${money("3.000.000")}</div>`)}
      <div class="row total"><span>TOTAL</span>${money("18.000.000")}</div>
      <div class="blank"></div>
      <div class="roles"><span>Dibuat oleh:</span><span>Disetujui oleh:</span><span>Mengetahui Oleh :</span></div>
      <svg class="sig" width="133.300" height="67" viewBox="160 80 400 201" fill="none" stroke="#5a5a5a" stroke-width="3.200" stroke-linecap="round">
        <path d="M170 119L306 98C310 90 298 87 294 96C296 130 314 155 323 195C331 232 328 267 302 272C262 276 190 262 177 240C168 215 230 170 368 159"/>
        <path d="M371 175C388 172 401 150 401 118C396 88 358 86 350 118C345 155 360 195 380 240C390 270 394 278 402 274C407 262 397 225 400 202C403 198 407 226 415 232C425 228 424 206 427 204C430 212 430 235 437 231C447 222 449 205 450 188C452 215 470 240 476 262C478 278 462 278 460 262C462 238 475 220 500 205C520 194 535 188 549 184"/>
      </svg>
      <div class="names">${["Yopi Hendriansah", "Latief Panji", "Farizko Ikhsan", "Rikhi Nugroho", "Riki Nelson"].map((n) => html`<span><b>( ${n} )</b>23 April 2024</span>`)}</div>
    </div>`;
  }
}

@customElement("app-root")
class AppRoot extends LitElement {
  static styles = css`
    :host { display: block; width: 1366px; height: 768px; overflow: hidden; background: #202020; }
    .stage { position: relative; height: 612px; overflow: hidden; }
    .preview { position: absolute; left: 183px; top: 80px; }
  `;
  render() {
    return html`<system-panel></system-panel><browser-chrome></browser-chrome>
      <div class="stage"><drive-backdrop></drive-backdrop><advance-form class="preview"></advance-form></div>`;
  }
}
